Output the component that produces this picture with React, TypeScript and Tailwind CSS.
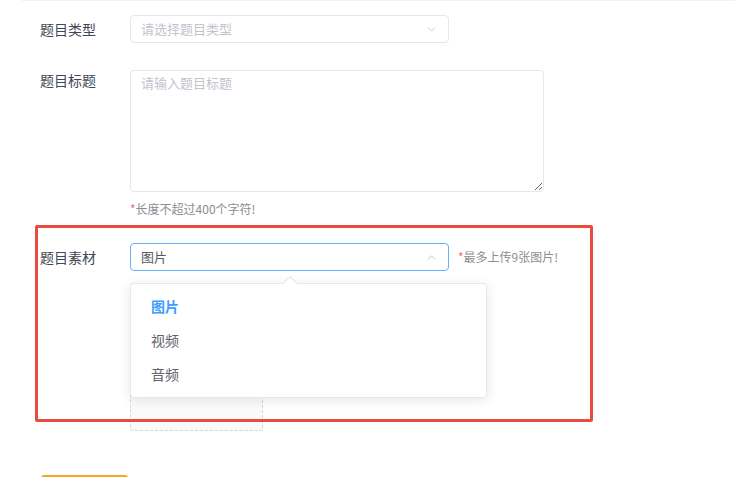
import { ChevronDown, ChevronUp } from "lucide-react";

const materialOptions = ["图片", "视频", "音频"];

const Hint = ({ text }: { text: string }) => (
  <p className="text-[12px] leading-[14px] text-[#8a8d93]">
    <span className="text-[#f56c6c]">*</span>
    {text}
  </p>
);

const App = () => {
  return (
    <main
      className="relative w-[735px] h-[477px] overflow-hidden bg-white text-[14px]"
      style={{ fontFamily: '"Noto Sans CJK SC", "Noto Sans", sans-serif' }}
    >
      <div className="ml-[22px] border-t border-[#f2f2f2] pl-[18px]">
        {/* 题目类型 */}
        <div className="flex items-center mt-[14px]">
          <label className="w-[90px] text-[#3f4752]">题目类型</label>
          <div className="flex items-center justify-between w-[319px] h-[28px] rounded-[4px] border border-[#e4e7ed] pl-[10px] pr-[10px]">
            <span className="text-[13px] text-[#c0c4cc]">请选择题目类型</span>
            <ChevronDown size={13} strokeWidth={1.5} className="text-[#c0c4cc]" />
          </div>
        </div>

        {/* 题目标题 */}
        <div className="flex mt-[27px]">
          <label className="w-[90px] text-[#3f4752] leading-[20px]">题目标题</label>
          <div className="flex flex-col">
            <textarea
              className="w-[414px] h-[122px] rounded-[4px] border border-[#e4e7ed] px-[10px] py-[2px] text-[13px] outline-none placeholder:text-[#c0c4cc]"
              placeholder="请输入题目标题"
            />
            <div className="mt-[10px]">
              <Hint text="长度不超过400个字符!" />
            </div>
          </div>
        </div>

        {/* 题目素材 */}
        <div className="relative mt-[27px]">
          <div className="flex items-center">
            <label className="w-[90px] text-[#3f4752]">题目素材</label>
            <div className="flex items-center justify-between w-[319px] h-[28px] rounded-[4px] border border-[#66b1ff] pl-[10px] pr-[10px]">
              <span className="text-[13px] text-[#555a61]">图片</span>
              <ChevronUp size={13} strokeWidth={1.5} className="text-[#b0b4bc]" />
            </div>
            <div className="ml-[9px]">
              <Hint text="最多上传9张图片!" />
            </div>
          </div>

          {/* upload area */}
          <div className="ml-[90px] mt-[28px] w-[133px] h-[132px] rounded-[3px] border border-dashed border-[#d4d4d4] bg-[#fafafa]" />

          {/* dropdown */}
          <div className="absolute left-[90px] top-[40px] w-[357px] rounded-[4px] border border-[#e4e7ed] bg-white pt-[5px] pb-[6px] shadow-[0_2px_12px_rgba(0,0,0,0.1)]">
            <div className="absolute -top-[6px] left-[154px] w-[10px] h-[10px] rotate-45 border-l border-t border-[#e4e7ed] bg-white" />
            {materialOptions.map((item, index) => (
              <div
                key={item}
                className={
                  index === 0
                    ? "h-[34px] px-[20px] leading-[34px] font-bold text-[#409eff]"
                    : "h-[34px] px-[20px] leading-[34px] text-[#606266]"
                }
              >
                {item}
              </div>
            ))}
          </div>

          {/* highlight frame */}
          <div className="absolute -left-[5px] -top-[18px] w-[558px] h-[197px] rounded-[2px] border-[3px] border-[#ea4b3f] pointer-events-none" />
        </div>
      </div>

      {/* submit button edge */}
      <div className="absolute left-[41px] top-[475px] w-[87px] h-[10px] rounded-t-[3px] bg-[#f5a623]" />
    </main>
  );
};

export default App;
